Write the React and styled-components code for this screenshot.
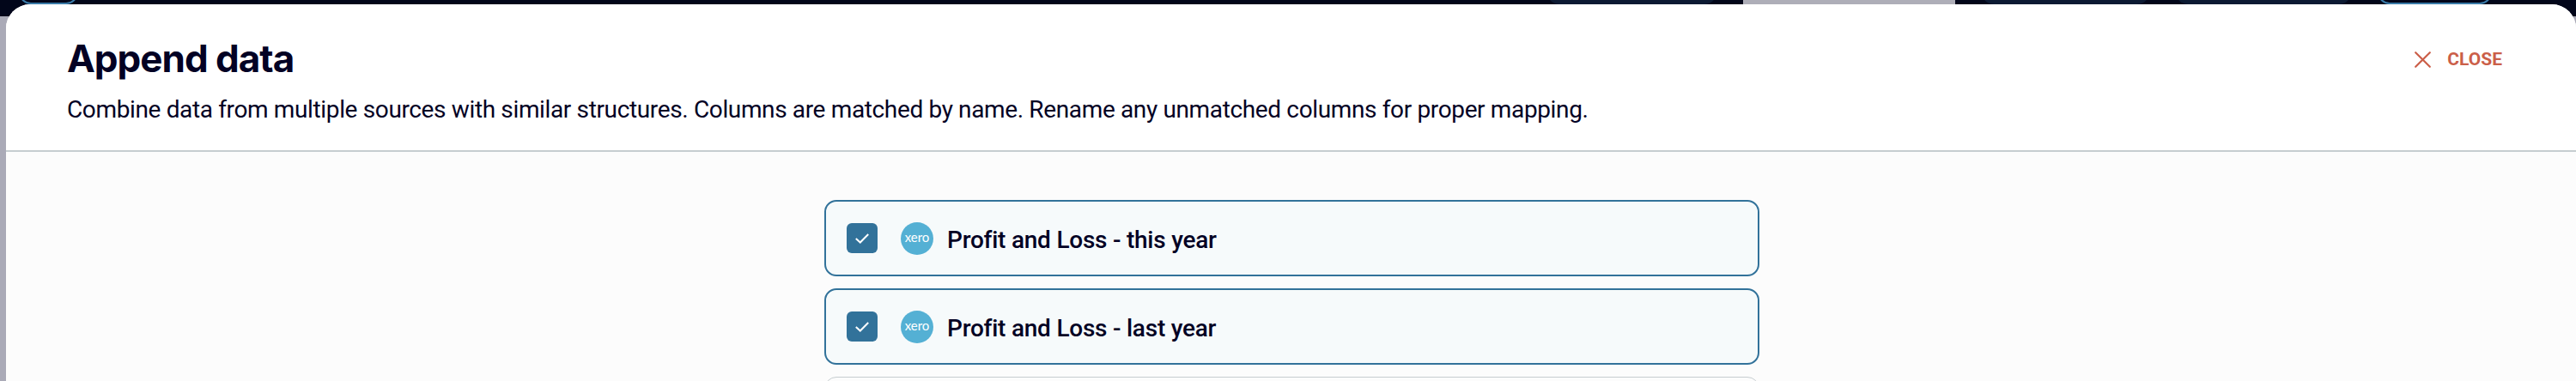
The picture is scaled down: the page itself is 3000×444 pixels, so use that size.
import React from "react";
import styled, { createGlobalStyle } from "styled-components";

const GlobalStyle = createGlobalStyle`
  * {
    box-sizing: border-box;
  }

  body {
    margin: 0;
    overflow: hidden;
    background: #aaaab7;
    color: #030124;
    font-family: Roboto, "Liberation Sans", sans-serif;
  }
`;

const Page = styled.div`
  position: relative;
  height: 444px;
  overflow: hidden;
`;

const TopBar = styled.div`
  display: flex;
  justify-content: space-between;
  align-items: flex-end;
  height: 19px;
  padding: 0 98px 14px 22px;
  background: #02061a;
`;

const BarGroup = styled.div`
  display: flex;
  gap: 31px;
`;

const BarItem = styled.div`
  width: ${props => props.$width}px;
  height: 56px;
  border-radius: 14px;
  background: #0c1a33;
`;

const BarOutline = styled(BarItem)`
  border: 2px solid #3a7ba8;
  background: none;
`;

const BarField = styled(BarItem)`
  border-radius: 0;
  background: #aeaeb8;
`;

const Modal = styled.div`
  position: absolute;
  inset: 5px 0 0 7px;
  overflow: hidden;
  border-radius: 28px 28px 0 0;
  background: #fcfcfc;
`;

const Header = styled.header`
  display: flex;
  justify-content: space-between;
  align-items: flex-start;
  height: 172px;
  padding: 36px 86px 0 71px;
  border-bottom: 2px solid #c6cdd0;
  background: #fff;
`;

const Heading = styled.div`
  display: flex;
  flex-direction: column;
  gap: 15px;
`;

const Title = styled.h1`
  margin: 0;
  font-family: Inter, sans-serif;
  font-size: 44px;
  font-weight: 700;
  line-height: 54px;
  letter-spacing: -1px;
`;

const Description = styled.p`
  margin: 0;
  font-size: 28px;
  line-height: 36px;
  letter-spacing: -0.36px;
  white-space: nowrap;
`;

const CloseButton = styled.button`
  display: flex;
  align-items: center;
  gap: 19px;
  padding: 13px 0 0;
  border: 0;
  background: none;
  color: #cb5f49;
  font-family: Roboto, sans-serif;
  font-size: 21px;
  font-weight: 700;
  line-height: 30px;
`;

const Content = styled.div`
  display: flex;
  justify-content: center;
  padding: 56px 0 0 2px;
`;

const List = styled.div`
  display: flex;
  flex-direction: column;
  gap: 14px;
  width: 1089px;
`;

const Row = styled.div`
  display: flex;
  align-items: center;
  height: 89px;
  padding-left: 24px;
  border: ${props => (props.$checked ? "2px solid #32729a" : "1px solid #c6cdd0")};
  border-radius: 14px;
  background: ${props => (props.$checked ? "#f6fafb" : "#fcfcfc")};
`;

const Checkbox = styled.div`
  display: flex;
  align-items: center;
  justify-content: center;
  width: 36px;
  height: 35px;
  border-radius: 6px;
  background: #32729a;
`;

const Source = styled.div`
  display: flex;
  align-items: center;
  gap: 16px;
  padding-left: 27px;
`;

const Logo = styled.div`
  width: 38px;
  height: 38px;
  border-radius: 50%;
  background: #54b0d4;
  color: #fff;
  font-family: Lato, sans-serif;
  font-size: 15px;
  line-height: 34px;
  text-align: center;
`;

const Name = styled.span`
  padding-top: 4px;
  font-size: 28px;
  font-weight: 500;
  line-height: 36px;
  letter-spacing: -0.24px;
`;

const sources = ["Profit and Loss - this year", "Profit and Loss - last year"];

export default () => (
  <Page>
    <GlobalStyle />
    <TopBar>
      <BarOutline $width={69} />
      <BarGroup>
        <BarItem $width={197} />
        <BarField $width={247} />
        <BarItem $width={195} />
        <BarItem $width={204} />
        <BarOutline $width={133} />
      </BarGroup>
    </TopBar>
    <Modal>
      <Header>
        <Heading>
          <Title>Append data</Title>
          <Description>
            Combine data from multiple sources with similar structures. Columns
            are matched by name. Rename any unmatched columns for proper
            mapping.
          </Description>
        </Heading>
        <CloseButton>
          <svg width="19" height="19" viewBox="0 0 19 19" stroke="currentColor" strokeWidth="2.2" strokeLinecap="round">
            <path d="M1.2 1.2 17.8 17.8M17.8 1.2 1.2 17.8" />
          </svg>
          CLOSE
        </CloseButton>
      </Header>
      <Content>
        <List>
          {sources.map(name => (
            <Row key={name} $checked>
              <Checkbox>
                <svg width="16" height="12" viewBox="0 0 16 12" fill="none" stroke="#fff" strokeWidth="2">
                  <path d="M.8 6 5.8 10.5 15.2 1" />
                </svg>
              </Checkbox>
              <Source>
                <Logo>xero</Logo>
                <Name>{name}</Name>
              </Source>
            </Row>
          ))}
          <Row />
        </List>
      </Content>
    </Modal>
  </Page>
);
